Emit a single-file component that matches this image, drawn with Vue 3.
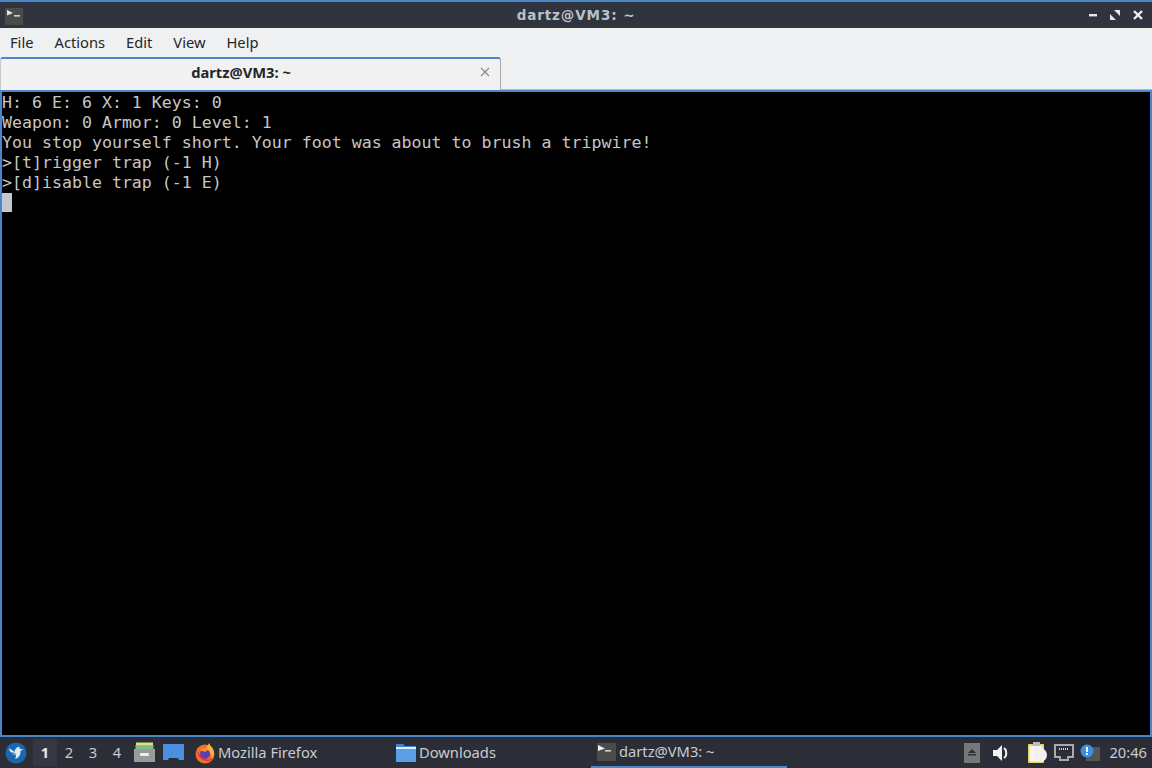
<script setup>
const menus = ['File', 'Actions', 'Edit', 'View', 'Help']
const lines = [
  'H: 6 E: 6 X: 1 Keys: 0',
  'Weapon: 0 Armor: 0 Level: 1',
  'You stop yourself short. Your foot was about to brush a tripwire!',
  '>[t]rigger trap (-1 H)',
  '>[d]isable trap (-1 E)'
]
const desktops = ['1', '2', '3', '4']
</script>

<template>
  <div class="screen">
    <header class="titlebar">
      <svg class="title-icon" width="18" height="17" viewBox="0 0 18 17">
        <rect width="18" height="17" rx="1" fill="#4b4b4b" />
        <path d="M2 2l6 3-6 2.5z" fill="#e8e8e8" />
        <rect x="9" y="7" width="6" height="1.6" fill="#cfcfcf" />
      </svg>
      <div class="title">dartz@VM3: ~</div>
      <div class="win-buttons">
        <svg width="10" height="10" viewBox="0 0 10 10"><rect x="1" y="4" width="8" height="2.4" fill="#e6e8eb" /></svg>
        <svg width="12" height="12" viewBox="0 0 12 12"><path d="M5 1h6v6zM1 5l6 6H1z" fill="#e6e8eb" /><path d="M4 8l4-4" stroke="#2f343f" stroke-width="1" /></svg>
        <svg width="12" height="12" viewBox="0 0 12 12"><path d="M2 2l8 8M10 2l-8 8" stroke="#eef0f2" stroke-width="2.4" /></svg>
      </div>
    </header>

    <nav class="menubar">
      <span v-for="m in menus" :key="m" class="menu-item">{{ m }}</span>
    </nav>

    <div class="tabbar">
      <div class="tab">
        <span class="tab-label">dartz@VM3: ~</span>
        <svg class="tab-close" width="10" height="10" viewBox="0 0 10 10"><path d="M1 1l8 8M9 1l-8 8" stroke="#8a8a8a" stroke-width="1.2" /></svg>
      </div>
    </div>

    <main class="terminal">
      <div v-for="(l, i) in lines" :key="i" class="line">{{ l }}</div>
      <div class="line"><span class="cursor"></span></div>
    </main>

    <footer class="taskbar">
      <svg class="start" width="22" height="22" viewBox="0 0 22 22">
        <circle cx="11" cy="11" r="10.5" fill="#1b66ad" />
        <path d="M3.5 6.5c2.5.5 4 1.5 6 3.5 0-2.5 1.5-4.500 4.500-5.500l1 2.500 3.500.5-3 1.500c.5 4-2 7-5.500 8 1-1.500 1-3 .5-4-3-.5-6-3-7-7.500z" fill="#dcebf6" />
        <path d="M6.5 10.5l4 1.5M8 14l3-1" stroke="#1b66ad" stroke-width="1" />
      </svg>
      <div class="desktops">
        <span v-for="(d, i) in desktops" :key="d" class="desk" :class="{ active: i === 0 }">{{ d }}</span>
      </div>
      <svg class="quick" width="21" height="21" viewBox="0 0 21 21">
        <rect x="2" y="0.5" width="17" height="3" fill="#e4dc8a" />
        <rect x="1.5" y="3" width="18" height="4" fill="#7cc08a" />
        <rect y="7" width="21" height="13" fill="#9a9a9a" />
        <rect x="6" y="11" width="9" height="3" rx="1" fill="#efefef" />
      </svg>
      <svg class="quick q2" width="21" height="17" viewBox="0 0 21 17">
        <path d="M0 0h21v16h-5l-1-2H6l-1 2H0z" fill="#4a8fe0" />
      </svg>
      <div class="task firefox">
        <svg width="22" height="22" viewBox="0 0 22 22">
          <circle cx="11" cy="12" r="9.5" fill="#f0702a" />
          <path d="M15 1c1 3 5 5 5 10 0 2-1 4-2 5-1-5-3-8-6-9 1-2 2-4 3-6z" fill="#fbb13c" />
          <circle cx="11" cy="12" r="5" fill="#5b3fb5" />
          <path d="M3 9c1 6 5 10 11 10 2 0 4-1 5-3-3 2-8 2-11-1-2-2-3-4-5-6z" fill="#e6313f" />
          <path d="M6 8c2-2 6-2 8 0l-3 2z" fill="#f7923a" />
        </svg>
        <span>Mozilla Firefox</span>
      </div>
      <div class="task downloads">
        <svg width="20" height="19" viewBox="0 0 20 19">
          <path d="M0 1h7l2 2h11v16H0z" fill="#3d84d6" />
          <rect y="4" width="20" height="2" fill="#e4eefa" />
          <rect y="6" width="20" height="13" fill="#5a9ee8" />
        </svg>
        <span>Downloads</span>
      </div>
      <div class="task term-task">
        <svg width="19" height="18" viewBox="0 0 19 18">
          <rect width="19" height="18" fill="#4b4b4b" />
          <path d="M1 2l7 3.5L1 8z" fill="#efefef" />
          <rect x="8" y="7" width="6" height="1.6" fill="#cfcfcf" />
        </svg>
        <span>dartz@VM3: ~</span>
      </div>
      <div class="tray">
        <svg class="t-eject" width="16" height="20" viewBox="0 0 16 20">
          <rect width="16" height="20" fill="#777" />
          <path d="M8 6l4 4H4z" fill="#2b2e37" />
          <rect x="4" y="11" width="8" height="1.5" fill="#2b2e37" />
        </svg>
        <svg class="t-vol" width="17" height="16" viewBox="0 0 17 16">
          <path d="M0 5h4l5-5v16l-5-5H0z" fill="#f1f1f1" />
          <path d="M11 3c3 2 3 8 0 10" fill="none" stroke="#f1f1f1" stroke-width="2" />
        </svg>
        <svg class="t-clip" width="20" height="21" viewBox="0 0 20 21">
          <rect y="2" width="16" height="19" rx="1" fill="#e9d36b" />
          <rect x="1.5" y="4" width="13" height="15.5" fill="#f4f4f4" />
          <rect x="5" y="0" width="7" height="4" fill="#bcbcbc" />
          <circle cx="12" cy="13" r="7" fill="#f1f1f1" />
        </svg>
        <svg class="t-net" width="20" height="17" viewBox="0 0 20 17">
          <path d="M1 1h18v12h-5v3H6v-3H1z" fill="none" stroke="#a9a9a9" stroke-width="2" />
          <path d="M5 5h10" stroke="#d8d8d8" stroke-width="2" stroke-dasharray="1 1" />
        </svg>
        <svg class="t-note" width="20" height="17" viewBox="0 0 20 17">
          <rect x="6" y="3" width="14" height="14" fill="#555" />
          <circle cx="7" cy="7" r="6.5" fill="#3d8fe0" />
          <rect x="6" y="3" width="2" height="5" fill="#fff" />
          <rect x="6" y="9" width="2" height="2" fill="#fff" />
        </svg>
        <span class="clock">20:46</span>
      </div>
    </footer>
  </div>
</template>

<style>
html, body { margin: 0; background: #000; }
</style>

<style scoped>
.screen {
  width: 1152px;
  height: 768px;
  display: flex;
  flex-direction: column;
  overflow: hidden;
  font-family: "Noto Sans", "Open Sans", sans-serif;
}
.titlebar {
  height: 26px;
  flex: none;
  background: #2f343f;
  border-top: 2px solid #4a86c8;
  position: relative;
  display: flex;
  align-items: center;
  justify-content: center;
}
.title-icon { position: absolute; left: 5px; top: 6px; }
.title {
  color: #bcc1c9;
  font-family: "DejaVu Sans", sans-serif;
  font-size: 13.5px;
  font-weight: 700;
  letter-spacing: 0.9px;
}
.win-buttons {
  position: absolute;
  right: 8px;
  top: 7px;
  display: flex;
  gap: 11px;
  align-items: center;
}
.menubar {
  height: 29px;
  flex: none;
  background: #eff0f1;
  display: flex;
  align-items: center;
  box-sizing: border-box;
  padding: 0 0 2px 10px;
  gap: 21px;
  font-size: 14.7px;
  color: #232629;
}
.tabbar {
  height: 33px;
  flex: none;
  background: #eff0f1;
  box-sizing: border-box;
  border-bottom: 1px solid #b8b9ba;
  display: flex;
}
.tab {
  width: 501px;
  box-sizing: border-box;
  height: 33px;
  background: #f1f1f2;
  border-top: 2px solid #4a86c8;
  border-right: 1px solid #a9aaab;
  border-left: 1px solid #c8c9ca;
  border-radius: 3px 3px 0 0;
  position: relative;
  display: flex;
  align-items: center;
  justify-content: center;
}
.tab-label {
  font-size: 14.7px;
  font-weight: 700;
  color: #232629;
  margin-right: 19px;
  margin-bottom: 6px;
}
.tab-close { position: absolute; right: 10px; top: 8px; }
.terminal {
  flex: 1;
  min-height: 0;
  background: #000;
  border: 2px solid #4a86c8;
  box-sizing: border-box;
  padding: 1px 0 0 0;
  color: #c6c6c6;
  font-family: "DejaVu Sans Mono", monospace;
  font-size: 16.6px;
  line-height: 20px;
  white-space: pre;
}
.line { height: 20px; }
.cursor {
  display: block;
  width: 10px;
  height: 19px;
  background: #c4c8cc;
}
.taskbar {
  height: 31px;
  flex: none;
  background: #2b2e37;
  display: flex;
  align-items: center;
  color: #c9ccd0;
  font-size: 14.7px;
  position: relative;
}
.start { margin-left: 5px; flex: none; }
.desktops {
  display: flex;
  margin-left: 6px;
  font-size: 14.7px;
}
.desk {
  width: 24px;
  height: 27px;
  line-height: 26px;
  text-align: center;
}
.desk.active {
  background: #353842;
  color: #e8e8e8;
  font-weight: 700;
  border-radius: 2px;
}
.quick { margin-left: 5px; flex: none; }
.q2 { margin-left: 8px; }
.task {
  display: flex;
  align-items: center;
  height: 31px;
  box-sizing: border-box;
  gap: 2px;
  flex: none;
}
.task span { margin-top: -2px; }
.firefox { width: 202px; margin-left: 10px; }
.downloads { width: 195px; gap: 3px; }
.term-task {
  width: 196px;
  padding-left: 6px;
  gap: 3px;
  border-bottom: 2px solid #4a86c8;
  height: 31px;
}
.tray {
  margin-left: auto;
  display: flex;
  align-items: center;
  padding-right: 5px;
}
.clock { margin-top: -2px; }
.t-vol { margin-left: 13px; }
.t-clip { margin-left: 18px; }
.t-net { margin-left: 6px; }
.t-note { margin-left: 6px; }
.clock { margin-left: 9px; }
</style>
